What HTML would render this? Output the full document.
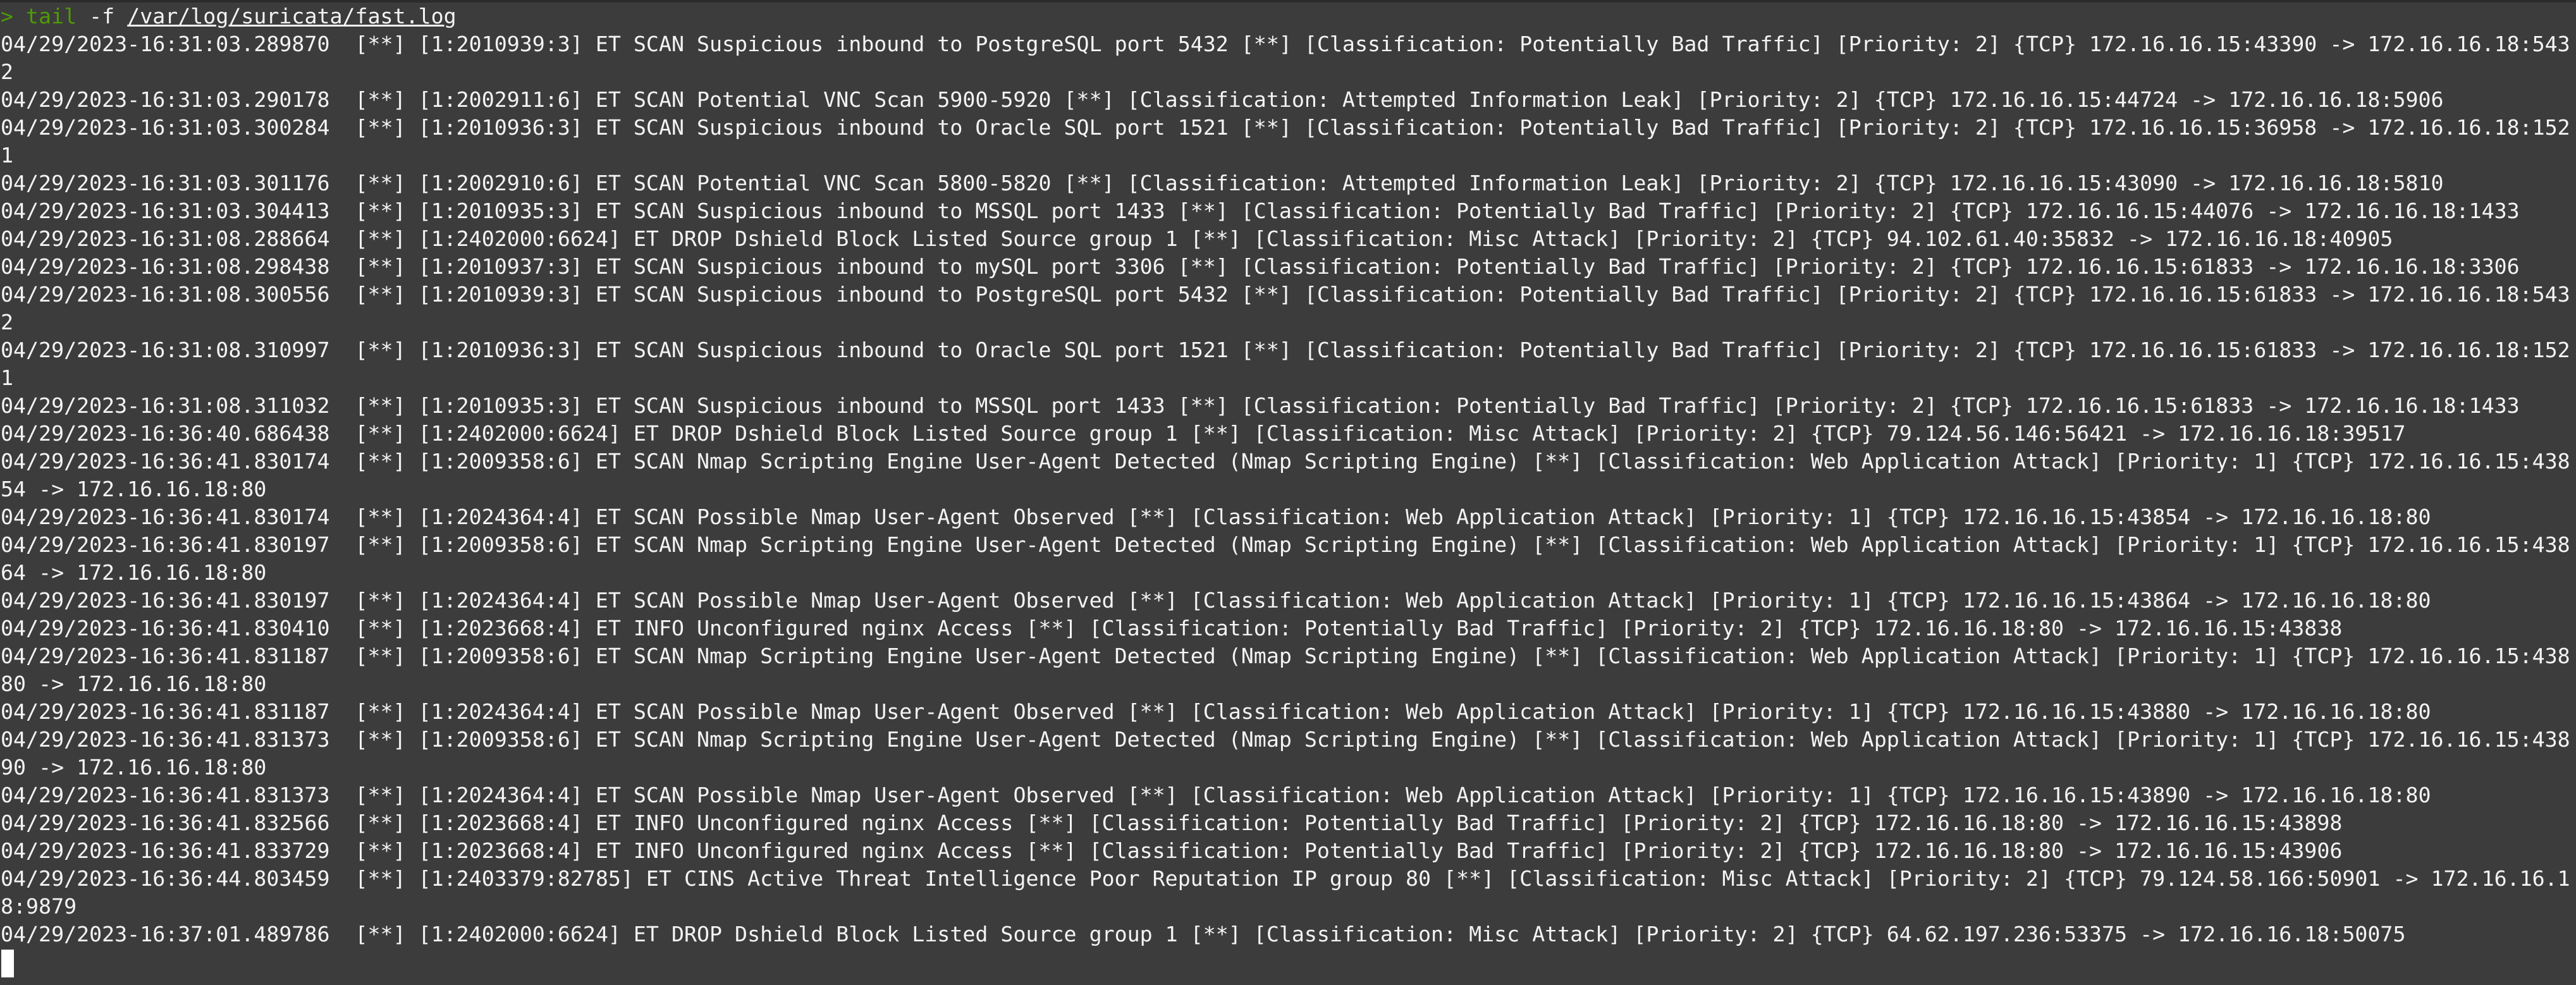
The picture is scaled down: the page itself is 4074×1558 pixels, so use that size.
<!DOCTYPE html>
<html><head><meta charset="utf-8"><style>
html,body{margin:0;padding:0;}
body{width:4074px;height:1558px;background:#3c3c3c;overflow:hidden;position:relative;}
.top{position:absolute;left:0;top:0;width:4074px;height:4px;background:#2b2b2b;}
pre{position:absolute;left:1px;top:4px;margin:0;font-family:"DejaVu Sans Mono","Liberation Mono",monospace;font-size:33.26px;line-height:44px;color:#f4f4f4;white-space:pre;}
.g{color:#4e9a06}.u{text-decoration:underline}
.cur{position:absolute;left:2px;top:1502px;width:20px;height:44px;background:#fff;}
</style></head><body><div class="top"></div>
<pre><span class="g">&gt; tail</span> -f <span class="u">/var/log/suricata/fast.log</span>
04/29/2023-16:31:03.289870  [**] [1:2010939:3] ET SCAN Suspicious inbound to PostgreSQL port 5432 [**] [Classification: Potentially Bad Traffic] [Priority: 2] {TCP} 172.16.16.15:43390 -&gt; 172.16.16.18:543
2
04/29/2023-16:31:03.290178  [**] [1:2002911:6] ET SCAN Potential VNC Scan 5900-5920 [**] [Classification: Attempted Information Leak] [Priority: 2] {TCP} 172.16.16.15:44724 -&gt; 172.16.16.18:5906
04/29/2023-16:31:03.300284  [**] [1:2010936:3] ET SCAN Suspicious inbound to Oracle SQL port 1521 [**] [Classification: Potentially Bad Traffic] [Priority: 2] {TCP} 172.16.16.15:36958 -&gt; 172.16.16.18:152
1
04/29/2023-16:31:03.301176  [**] [1:2002910:6] ET SCAN Potential VNC Scan 5800-5820 [**] [Classification: Attempted Information Leak] [Priority: 2] {TCP} 172.16.16.15:43090 -&gt; 172.16.16.18:5810
04/29/2023-16:31:03.304413  [**] [1:2010935:3] ET SCAN Suspicious inbound to MSSQL port 1433 [**] [Classification: Potentially Bad Traffic] [Priority: 2] {TCP} 172.16.16.15:44076 -&gt; 172.16.16.18:1433
04/29/2023-16:31:08.288664  [**] [1:2402000:6624] ET DROP Dshield Block Listed Source group 1 [**] [Classification: Misc Attack] [Priority: 2] {TCP} 94.102.61.40:35832 -&gt; 172.16.16.18:40905
04/29/2023-16:31:08.298438  [**] [1:2010937:3] ET SCAN Suspicious inbound to mySQL port 3306 [**] [Classification: Potentially Bad Traffic] [Priority: 2] {TCP} 172.16.16.15:61833 -&gt; 172.16.16.18:3306
04/29/2023-16:31:08.300556  [**] [1:2010939:3] ET SCAN Suspicious inbound to PostgreSQL port 5432 [**] [Classification: Potentially Bad Traffic] [Priority: 2] {TCP} 172.16.16.15:61833 -&gt; 172.16.16.18:543
2
04/29/2023-16:31:08.310997  [**] [1:2010936:3] ET SCAN Suspicious inbound to Oracle SQL port 1521 [**] [Classification: Potentially Bad Traffic] [Priority: 2] {TCP} 172.16.16.15:61833 -&gt; 172.16.16.18:152
1
04/29/2023-16:31:08.311032  [**] [1:2010935:3] ET SCAN Suspicious inbound to MSSQL port 1433 [**] [Classification: Potentially Bad Traffic] [Priority: 2] {TCP} 172.16.16.15:61833 -&gt; 172.16.16.18:1433
04/29/2023-16:36:40.686438  [**] [1:2402000:6624] ET DROP Dshield Block Listed Source group 1 [**] [Classification: Misc Attack] [Priority: 2] {TCP} 79.124.56.146:56421 -&gt; 172.16.16.18:39517
04/29/2023-16:36:41.830174  [**] [1:2009358:6] ET SCAN Nmap Scripting Engine User-Agent Detected (Nmap Scripting Engine) [**] [Classification: Web Application Attack] [Priority: 1] {TCP} 172.16.16.15:438
54 -&gt; 172.16.16.18:80
04/29/2023-16:36:41.830174  [**] [1:2024364:4] ET SCAN Possible Nmap User-Agent Observed [**] [Classification: Web Application Attack] [Priority: 1] {TCP} 172.16.16.15:43854 -&gt; 172.16.16.18:80
04/29/2023-16:36:41.830197  [**] [1:2009358:6] ET SCAN Nmap Scripting Engine User-Agent Detected (Nmap Scripting Engine) [**] [Classification: Web Application Attack] [Priority: 1] {TCP} 172.16.16.15:438
64 -&gt; 172.16.16.18:80
04/29/2023-16:36:41.830197  [**] [1:2024364:4] ET SCAN Possible Nmap User-Agent Observed [**] [Classification: Web Application Attack] [Priority: 1] {TCP} 172.16.16.15:43864 -&gt; 172.16.16.18:80
04/29/2023-16:36:41.830410  [**] [1:2023668:4] ET INFO Unconfigured nginx Access [**] [Classification: Potentially Bad Traffic] [Priority: 2] {TCP} 172.16.16.18:80 -&gt; 172.16.16.15:43838
04/29/2023-16:36:41.831187  [**] [1:2009358:6] ET SCAN Nmap Scripting Engine User-Agent Detected (Nmap Scripting Engine) [**] [Classification: Web Application Attack] [Priority: 1] {TCP} 172.16.16.15:438
80 -&gt; 172.16.16.18:80
04/29/2023-16:36:41.831187  [**] [1:2024364:4] ET SCAN Possible Nmap User-Agent Observed [**] [Classification: Web Application Attack] [Priority: 1] {TCP} 172.16.16.15:43880 -&gt; 172.16.16.18:80
04/29/2023-16:36:41.831373  [**] [1:2009358:6] ET SCAN Nmap Scripting Engine User-Agent Detected (Nmap Scripting Engine) [**] [Classification: Web Application Attack] [Priority: 1] {TCP} 172.16.16.15:438
90 -&gt; 172.16.16.18:80
04/29/2023-16:36:41.831373  [**] [1:2024364:4] ET SCAN Possible Nmap User-Agent Observed [**] [Classification: Web Application Attack] [Priority: 1] {TCP} 172.16.16.15:43890 -&gt; 172.16.16.18:80
04/29/2023-16:36:41.832566  [**] [1:2023668:4] ET INFO Unconfigured nginx Access [**] [Classification: Potentially Bad Traffic] [Priority: 2] {TCP} 172.16.16.18:80 -&gt; 172.16.16.15:43898
04/29/2023-16:36:41.833729  [**] [1:2023668:4] ET INFO Unconfigured nginx Access [**] [Classification: Potentially Bad Traffic] [Priority: 2] {TCP} 172.16.16.18:80 -&gt; 172.16.16.15:43906
04/29/2023-16:36:44.803459  [**] [1:2403379:82785] ET CINS Active Threat Intelligence Poor Reputation IP group 80 [**] [Classification: Misc Attack] [Priority: 2] {TCP} 79.124.58.166:50901 -&gt; 172.16.16.1
8:9879
04/29/2023-16:37:01.489786  [**] [1:2402000:6624] ET DROP Dshield Block Listed Source group 1 [**] [Classification: Misc Attack] [Priority: 2] {TCP} 64.62.197.236:53375 -&gt; 172.16.16.18:50075</pre>
<div class="cur"></div>
</body></html>
